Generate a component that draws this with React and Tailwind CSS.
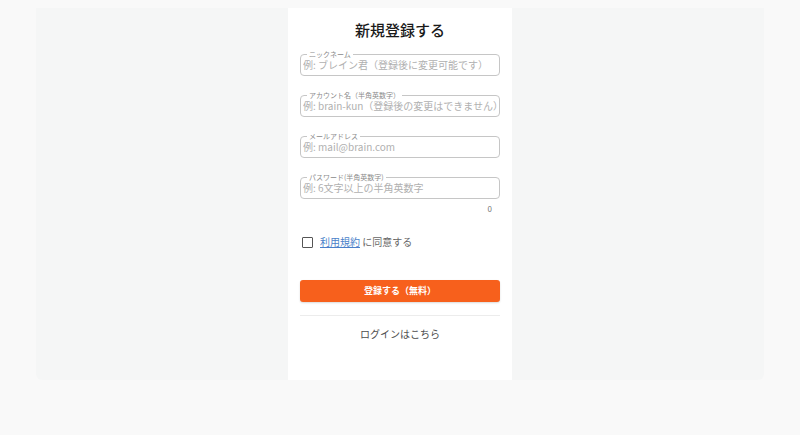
import React, { useState } from 'react';

const fields = [
  { name: 'nickname', label: 'ニックネーム', placeholder: '例: ブレイン君（登録後に変更可能です）', type: 'text' },
  { name: 'account', label: 'アカウント名（半角英数字）', placeholder: '例: brain-kun（登録後の変更はできません）', type: 'text' },
  { name: 'email', label: 'メールアドレス', placeholder: '例: mail@brain.com', type: 'email' },
  { name: 'password', label: 'パスワード(半角英数字)', placeholder: '例: 6文字以上の半角英数字', type: 'password' },
];

const OutlinedInput = ({ field, value, onChange }) => (
  <div className="relative flex h-[22px] items-start rounded-[4px] border border-[#c6c6c6]">
    {/* notched label */}
    <span className="absolute -top-[5px] left-[6px] bg-white px-[2px] text-[7px] leading-[9px] text-[#8a8a8a]">
      {field.label}
    </span>
    <input
      type={field.type}
      name={field.name}
      value={value}
      onChange={onChange}
      placeholder={field.placeholder}
      className="mt-[2px] h-[15px] w-full bg-transparent pl-[2px] text-[10px] leading-[15px] text-[#333] placeholder-[#b0b0b0] outline-none"
    />
  </div>
);

const App = () => {
  const [formData, setFormData] = useState({ nickname: '', account: '', email: '', password: '' });
  const [agreed, setAgreed] = useState(false);

  const handleChange = (e) => {
    const { name, value } = e.target;
    setFormData(prev => ({ ...prev, [name]: value }));
  };

  return (
    <div
      className="h-[435px] w-full bg-[#f9f9f9] pt-2"
      style={{ fontFamily: '"Noto Sans CJK JP", "Noto Sans", Roboto, sans-serif' }}
    >
      <div className="mx-[36px] flex h-[372px] justify-center rounded-b-[6px] bg-[#f5f6f6]">
        <div className="flex w-[224px] flex-col bg-white px-3 pt-[11px]">
          <h1 className="h-[22px] text-center text-[15px] font-medium leading-[22px] text-[#1a1a1a]">
            新規登録する
          </h1>

          {/* Fields */}
          <div className="mt-[13px] flex flex-col gap-[19px]">
            {fields.map(field => (
              <OutlinedInput
                key={field.name}
                field={field}
                value={formData[field.name]}
                onChange={handleChange}
              />
            ))}
          </div>

          <div className="mt-[5px] h-[10px] pr-[8px] text-right text-[8px] leading-[10px] text-[#777]">
            {formData.password.length}
          </div>

          {/* Terms */}
          <label className="mt-[20px] flex h-[16px] cursor-pointer items-center gap-[7px] pl-[2px]">
            <input
              type="checkbox"
              checked={agreed}
              onChange={() => setAgreed(!agreed)}
              className="sr-only"
            />
            <span className="flex h-[11px] w-[11px] items-center justify-center rounded-[1px] border-[1.5px] border-[#555]">
              {agreed && (
                <svg viewBox="0 0 24 24" className="h-[9px] w-[9px]" fill="none" stroke="#555" strokeWidth="4">
                  <path d="M4 12l5 5L20 6" />
                </svg>
              )}
            </span>
            <span className="text-[10px] leading-[14px] text-[#666]">
              <a href="#" className="text-[#4a7fc9] underline">利用規約</a> に同意する
            </span>
          </label>

          <button
            type="button"
            className="mt-[30px] h-[22px] w-full rounded-[3px] bg-[#f7601c] text-[9px] font-bold text-white shadow-[0_1px_2px_rgba(0,0,0,0.15)]"
          >
            登録する（無料）
          </button>

          <div className="mt-[13px] h-px bg-[#ececec]" />

          <a href="#" className="mt-[11px] h-[14px] text-center text-[10px] leading-[14px] text-[#4d4d4d]">
            ログインはこちら
          </a>
        </div>
      </div>
    </div>
  );
};

export default App;
